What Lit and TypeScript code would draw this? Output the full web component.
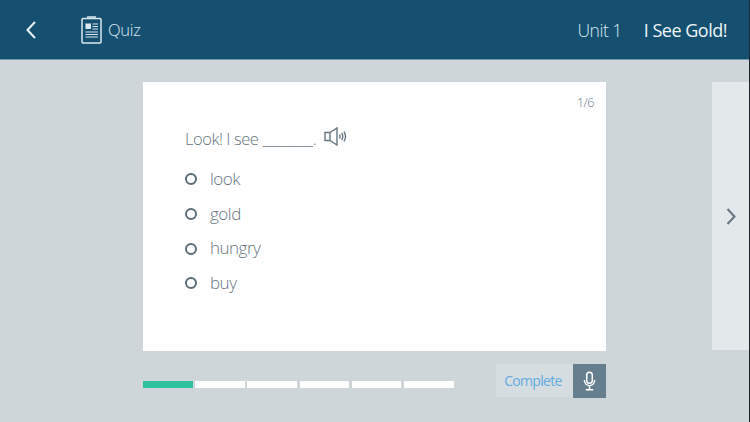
import { LitElement, html, css } from 'lit';
import { customElement, state } from 'lit/decorators.js';

@customElement('app-root')
export class AppRoot extends LitElement {
  @state()
  options = ['look', 'gold', 'hungry', 'buy'];

  @state()
  steps = [true, false, false, false, false, false];

  static styles = css`
    :host {
      display: block;
      position: relative;
      width: 750px;
      height: 422px;
      overflow: hidden;
      font-family: "Open Sans", "Noto Sans", sans-serif;
      background: #cfd6da;
      color: #65757f;
    }
    :host::after {
      content: "";
      position: absolute;
      top: 0;
      right: 0;
      width: 1px;
      height: 100%;
      background: #20282d;
    }
    .header {
      height: 60px;
      box-sizing: border-box;
      background: #165070;
      border-bottom: 1px solid #6f96ad;
      display: flex;
      align-items: center;
      padding: 0 23px 0 26px;
      color: #dce8f0;
    }
    .back {
      width: 10px;
      height: 18px;
      margin-right: 45px;
    }
    .doc {
      width: 21px;
      height: 28px;
      margin-right: 6px;
    }
    .title {
      font-size: 16.5px;
      font-weight: 300;
      letter-spacing: -0.3px;
      flex-grow: 1;
      opacity: 0.999;
    }
    .unit {
      font-size: 17.5px;
      font-weight: 300;
      letter-spacing: -0.5px;
      margin-right: 22px;
      opacity: 0.999;
    }
    .lesson {
      font-size: 18px;
      font-weight: 400;
      letter-spacing: -0.5px;
      color: #eef4f8;
      opacity: 0.999;
    }
    .body {
      height: 362px;
      box-sizing: border-box;
      padding: 22px 0 0 143px;
      display: flex;
    }
    .main {
      width: 463px;
      margin-right: 106px;
    }
    .card {
      height: 269px;
      box-sizing: border-box;
      background: #fff;
      padding: 12px 12px 0 42px;
      display: flex;
      flex-direction: column;
    }
    .count {
      align-self: flex-end;
      font-size: 12.5px;
      font-weight: 300;
      letter-spacing: -0.5px;
      line-height: 18px;
      color: #65757f;
      opacity: 0.999;
    }
    .question {
      display: flex;
      align-items: center;
      font-size: 16.5px;
      font-weight: 300;
      letter-spacing: -0.45px;
      line-height: 24px;
      margin-top: 15px;
      margin-bottom: 10px;
      opacity: 0.999;
    }
    .speaker {
      width: 23px;
      height: 19px;
      margin: -5px 0 0 8px;
    }
    .option {
      display: flex;
      align-items: center;
      height: 34.7px;
      font-size: 17px;
      font-weight: 300;
      letter-spacing: -0.5px;
      opacity: 0.999;
    }
    .radio {
      width: 12px;
      height: 12px;
      box-sizing: border-box;
      border: 2.5px solid #5a6b74;
      border-radius: 50%;
      margin: 2px 13px 0 0;
    }
    .footer {
      display: flex;
      align-items: center;
      height: 47px;
      margin-top: 6px;
    }
    .progress {
      display: flex;
      gap: 2.6px;
      margin-right: 42.4px;
      margin-top: 7px;
    }
    .step {
      width: 49.6px;
      height: 7px;
      background: #fff;
    }
    .step.done {
      background: #2fc2a0;
    }
    .complete {
      width: 77px;
      height: 33px;
      box-sizing: border-box;
      padding-right: 3px;
      background: #d6dde1;
      color: #62ace0;
      font-size: 14px;
      letter-spacing: -0.7px;
      display: flex;
      align-items: center;
      justify-content: center;
      opacity: 0.999;
    }
    .mic {
      width: 33px;
      height: 34px;
      background: #667f8f;
      display: flex;
      align-items: center;
      justify-content: center;
    }
    .next {
      width: 37px;
      height: 268px;
      background: #e3e8eb;
      display: flex;
      align-items: center;
      justify-content: center;
    }
    .next svg {
      width: 10px;
      height: 17px;
      margin-left: 1px;
    }
  `;

  render() {
    return html`
      <div class="header">
        <svg class="back" viewBox="0 0 10 18" fill="none" stroke="#f0f5f8" stroke-width="2">
          <path d="M9 1 1.500 9 9 17" />
        </svg>
        <svg class="doc" viewBox="0 0 21 28" fill="none" stroke="#dce8f0">
          <path d="M2 2.500h17a1 1 0 0 1 1 1V26a1 1 0 0 1-1 1H2a1 1 0 0 1-1-1V3.500a1 1 0 0 1 1-1Z" stroke-width="1.500" />
          <path d="M6 1h9" stroke-width="1.500" />
          <rect x="4.500" y="7.500" width="5.500" height="5.500" fill="#dce8f0" stroke="none" />
          <path d="M11.500 8h5.500M11.500 10.500h5.500M11.500 13h5.500M4.500 16h12.500M4.500 18.500h12.500M4.500 21h12.500" stroke-width="1.200" />
        </svg>
        <div class="title">Quiz</div>
        <div class="unit">Unit 1</div>
        <div class="lesson">I See Gold!</div>
      </div>
      <div class="body">
        <div class="main">
          <div class="card">
            <div class="count">1/6</div>
            <div class="question">
              Look! I see ________.
              <svg class="speaker" viewBox="0 0 23 19" fill="none" stroke="#65757f" stroke-width="1.400">
                <path d="M1 5.500h5v8H1ZM6 5.500l7-4.500v17l-7-4.500" />
                <path d="M15.500 7.500c.8 1.300.8 2.700 0 4M17.700 6c1.400 2.200 1.400 4.800 0 7M20 4.500c1.900 3.100 1.900 6.900 0 10" />
              </svg>
            </div>
            ${this.options.map((o) => html`
              <div class="option"><span class="radio"></span>${o}</div>
            `)}
          </div>
          <div class="footer">
            <div class="progress">
              ${this.steps.map((done) => html`<div class="step ${done ? 'done' : ''}"></div>`)}
            </div>
            <div class="complete">Complete</div>
            <div class="mic">
              <svg width="13" height="20" viewBox="0 0 14 21" fill="none" stroke="#fff" stroke-width="1.600">
                <rect x="4" y="1" width="6" height="12" rx="3" />
                <path d="M1.500 9.500c0 3.500 2.300 6 5.500 6s5.500-2.500 5.500-6M7 15.500v4M3 20h8" />
              </svg>
            </div>
          </div>
        </div>
        <div class="next">
          <svg viewBox="0 0 10 17" fill="none" stroke="#64757f" stroke-width="2">
            <path d="M1.500 1 8.500 8.500l-7 7.500" />
          </svg>
        </div>
      </div>
    `;
  }
}
